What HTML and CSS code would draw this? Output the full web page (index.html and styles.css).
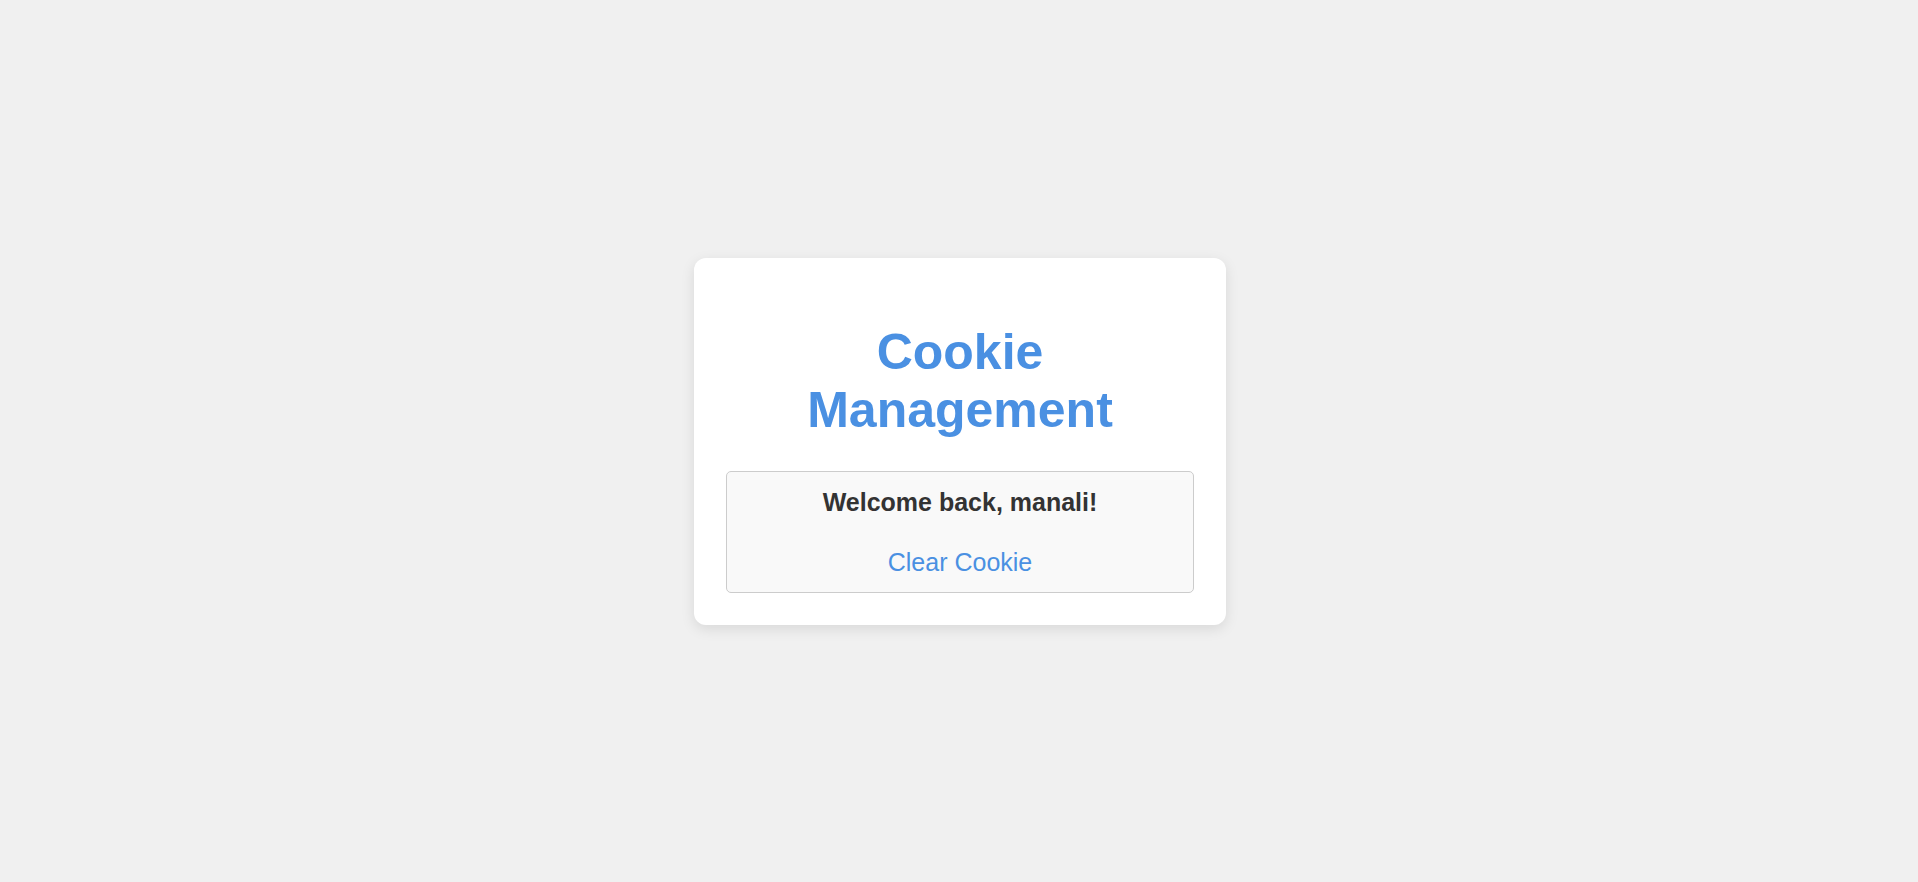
FILE: index.html
```html
<!DOCTYPE html>
<html lang="en">
<head>
<meta charset="utf-8">
<title>Cookie Management</title>
<link rel="stylesheet" href="styles.css">
</head>
<body>
  <main class="card">
    <h1 class="title">Cookie Management</h1>
    <section class="panel">
      <p class="welcome">Welcome back, manali!</p>
      <button class="clear-btn" type="button">Clear Cookie</button>
    </section>
  </main>
</body>
</html>
```

FILE: styles.css
```css
html, body {
  margin: 0;
  padding: 0;
}

body {
  min-height: 100vh;
  background: #f0f0f0;
  font-family: "Liberation Sans", Arial, sans-serif;
  display: flex;
  align-items: center;
  justify-content: center;
  padding-left: 2px;
  box-sizing: border-box;
}

.card {
  width: 468px;
  padding: 32px;
  background: #ffffff;
  border-radius: 12px;
  box-shadow: 0 4px 14px rgba(0, 0, 0, 0.1);
  text-align: center;
}

.title {
  margin: 33px 0 32px;
  font-size: 50px;
  font-weight: bold;
  line-height: normal;
  color: #4a90e2;
}

.panel {
  background: #f9f9f9;
  border: 1px solid #cccccc;
  border-radius: 5px;
  padding: 16px 15px 15px;
  display: flex;
  flex-direction: column;
  align-items: center;
}

.welcome {
  margin: 0 0 31px;
  font-size: 25px;
  font-weight: bold;
  line-height: normal;
  color: #333333;
}

.clear-btn {
  margin: 0;
  padding: 0;
  border: none;
  background: none;
  font-family: inherit;
  font-size: 25px;
  line-height: normal;
  color: #4a90e2;
  cursor: pointer;
}
```
